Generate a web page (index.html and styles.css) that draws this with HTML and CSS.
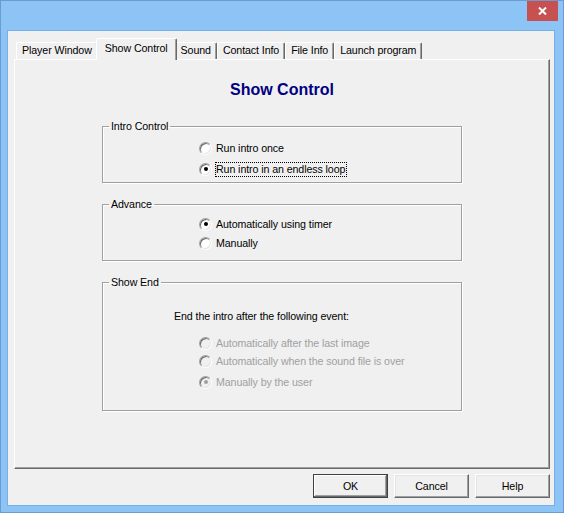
FILE: index.html
```html
<!DOCTYPE html>
<html>
<head>
<meta charset="utf-8">
<link rel="stylesheet" href="styles.css">
</head>
<body>
<div class="window">
  <div class="titlebar">
    <div class="close">
      <svg width="9" height="8" viewBox="0 0 9 8"><path d="M1 0.5 L8 7.5 M8 0.5 L1 7.5" stroke="#fff" stroke-width="2" fill="none"/></svg>
    </div>
  </div>
  <div class="client">
    <div class="tabs">
      <div class="tab">Player Window</div>
      <div class="tab active">Show Control</div>
      <div class="tab">Sound</div>
      <div class="tab">Contact Info</div>
      <div class="tab">File Info</div>
      <div class="tab">Launch program</div>
    </div>
    <div class="panel">
      <h1 class="title">Show Control</h1>
      <fieldset class="group g-intro">
        <legend>Intro Control</legend>
        <div class="opt"><span class="radio"></span><span class="text">Run intro once</span></div>
        <div class="opt gap5"><span class="radio checked"></span><span class="text focus">Run intro in an endless loop</span></div>
      </fieldset>
      <fieldset class="group g-advance">
        <legend>Advance</legend>
        <div class="opt"><span class="radio checked"></span><span class="text">Automatically using timer</span></div>
        <div class="opt gap3"><span class="radio"></span><span class="text">Manually</span></div>
      </fieldset>
      <fieldset class="group g-end">
        <legend>Show End</legend>
        <div class="caption">End the intro after the following event:</div>
        <div class="opt disabled gap11"><span class="radio"></span><span class="text">Automatically after the last image</span></div>
        <div class="opt disabled gap2"><span class="radio"></span><span class="text">Automatically when the sound file is over</span></div>
        <div class="opt disabled gap5"><span class="radio checked"></span><span class="text">Manually by the user</span></div>
      </fieldset>
    </div>
    <div class="buttons">
      <button class="btn default">OK</button>
      <button class="btn">Cancel</button>
      <button class="btn">Help</button>
    </div>
  </div>
</div>
</body>
</html>
```

FILE: styles.css
```css
html, body {
  margin: 0;
  padding: 0;
}
body {
  font-family: "Liberation Sans", Arial, sans-serif;
  font-size: 8pt;
  letter-spacing: -0.1px;
  color: #000;
  background: #8cc4f5;
}
.window {
  width: 564px;
  height: 513px;
  box-sizing: border-box;
  border: 1px solid #6b9bd0;
  background: #8cc4f5;
  display: flex;
  flex-direction: column;
}
.titlebar {
  height: 29px;
  flex: none;
  display: flex;
  justify-content: flex-end;
  align-items: flex-start;
  padding-right: 5px;
}
.close {
  width: 31px;
  height: 20px;
  background: #c75050;
  display: flex;
  align-items: center;
  justify-content: center;
}
.close svg {
  display: block;
}
.client {
  flex: 1;
  margin: 0 8px 6px 6px;
  border: 1px solid #79aee6;
  background: #f0f0f0;
  padding: 7px 4px 0 6px;
  display: flex;
  flex-direction: column;
}
.tabs {
  height: 21px;
  flex: none;
  display: flex;
  align-items: flex-end;
  padding-left: 2px;
}
.tab {
  height: 17px;
  box-sizing: border-box;
  padding: 0 5px;
  line-height: 15px;
  border: 1px solid #fff;
  border-right-color: #696969;
  border-bottom: none;
  border-radius: 2px 2px 0 0;
  box-shadow: inset -1px 0 0 #a0a0a0;
  background: #f0f0f0;
  white-space: nowrap;
}
.tab.active {
  height: 22px;
  margin: 0 -2px -1px;
  padding: 0 8px 2px;
  line-height: 18px;
  position: relative;
  z-index: 1;
}
.panel {
  height: 410px;
  flex: none;
  box-sizing: border-box;
  border: 1px solid;
  border-color: #fff #696969 #696969 #fff;
  box-shadow: inset -1px -1px 0 #a0a0a0;
  display: flex;
  flex-direction: column;
  align-items: center;
}
.title {
  margin: 20px 0 0;
  font-size: 16px;
  line-height: 20px;
  font-weight: bold;
  letter-spacing: 0;
  color: #000080;
}
.group {
  width: 360px;
  box-sizing: border-box;
  margin: 15px 0 0;
  padding: 0;
  border: 1px solid #a0a0a0;
  box-shadow: 1px 1px 0 #fff, inset 1px 1px 0 #fff;
}
.group legend {
  margin-left: 6px;
  padding: 0 2px;
  line-height: 13px;
}
.g-intro {
  margin-top: 20px;
  padding: 7px 0 5px;
}
.g-advance {
  padding: 5px 0 9px;
}
.g-end {
  padding: 19px 0 20px;
}
.caption {
  height: 16px;
  line-height: 16px;
  padding-left: 71px;
}
.opt {
  height: 16px;
  display: flex;
  align-items: center;
  padding-left: 96px;
}
.gap2 { margin-top: 2px; }
.gap3 { margin-top: 3px; }
.gap5 { margin-top: 5px; }
.gap11 { margin-top: 11px; }
.radio {
  width: 13px;
  height: 13px;
  box-sizing: border-box;
  border-radius: 50%;
  border: 1px solid;
  border-color: #a0a0a0 #ffffff #ffffff #a0a0a0;
  box-shadow: inset 1px 1px 0 #696969, inset -1px -1px 0 #e3e3e3;
  background: #fff;
  margin-right: 3px;
  display: flex;
  align-items: center;
  justify-content: center;
  flex: none;
}
.radio.checked::after {
  content: "";
  width: 4px;
  height: 4px;
  border-radius: 50%;
  background: #000;
}
.text {
  line-height: 13px;
  border: 1px dotted transparent;
  padding: 0 1px 0 0;
  white-space: nowrap;
}
.text.focus {
  border-color: #000;
}
.disabled .text {
  color: #a0a0a0;
}
.disabled .radio {
  background: #f0f0f0;
}
.disabled .radio.checked::after {
  background: #a0a0a0;
}
.buttons {
  display: flex;
  justify-content: flex-end;
  gap: 6px;
  margin-top: 5px;
}
.btn {
  width: 75px;
  height: 24px;
  box-sizing: border-box;
  font-family: inherit;
  font-size: 8pt;
  letter-spacing: -0.1px;
  color: #000;
  background: #f0f0f0;
  border: 1px solid;
  border-color: #fff #696969 #696969 #fff;
  box-shadow: inset -1px -1px 0 #a0a0a0, inset 1px 1px 0 #e3e3e3;
  padding: 0;
}
.btn.default {
  border: 1px solid #404040;
  box-shadow: inset -1px -1px 0 #696969, inset 1px 1px 0 #fff, inset -2px -2px 0 #a0a0a0;
}
```
